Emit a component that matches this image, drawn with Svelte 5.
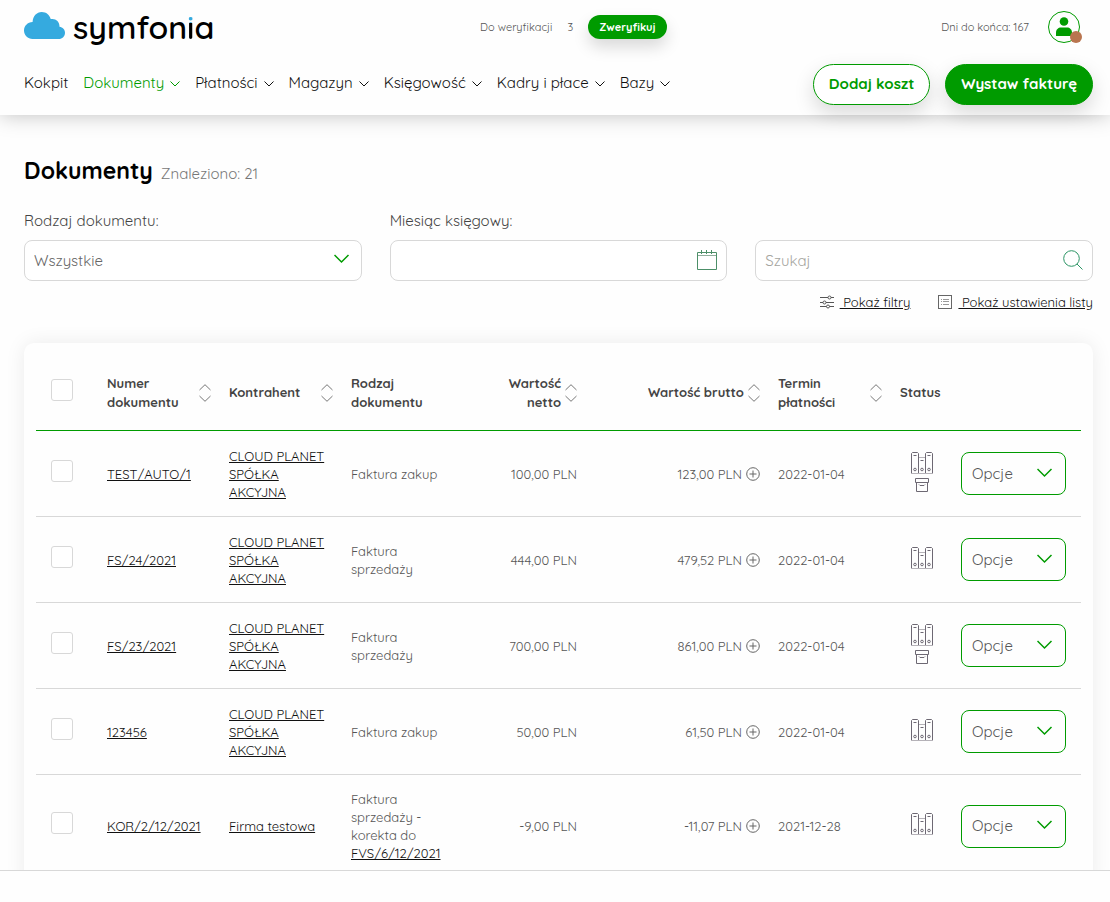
<script lang="ts">
	const nav = [
		{ label: 'Kokpit', menu: false, active: false },
		{ label: 'Dokumenty', menu: true, active: true },
		{ label: 'Płatności', menu: true, active: false },
		{ label: 'Magazyn', menu: true, active: false },
		{ label: 'Księgowość', menu: true, active: false },
		{ label: 'Kadry i płace', menu: true, active: false },
		{ label: 'Bazy', menu: true, active: false },
	];

	const documents = [
		{ number: 'TEST/AUTO/1', client: 'CLOUD PLANET SPÓŁKA AKCYJNA', type: 'Faktura zakup', ref: '', net: '100,00 PLN', gross: '123,00 PLN', due: '2022-01-04', archived: true },
		{ number: 'FS/24/2021', client: 'CLOUD PLANET SPÓŁKA AKCYJNA', type: 'Faktura sprzedaży', ref: '', net: '444,00 PLN', gross: '479,52 PLN', due: '2022-01-04', archived: false },
		{ number: 'FS/23/2021', client: 'CLOUD PLANET SPÓŁKA AKCYJNA', type: 'Faktura sprzedaży', ref: '', net: '700,00 PLN', gross: '861,00 PLN', due: '2022-01-04', archived: true },
		{ number: '123456', client: 'CLOUD PLANET SPÓŁKA AKCYJNA', type: 'Faktura zakup', ref: '', net: '50,00 PLN', gross: '61,50 PLN', due: '2022-01-04', archived: false },
		{ number: 'KOR/2/12/2021', client: 'Firma testowa', type: 'Faktura sprzedaży - korekta do', ref: 'FVS/6/12/2021', net: '-9,00 PLN', gross: '-11,07 PLN', due: '2021-12-28', archived: false },
	];

	let kind = $state('all');
	let month = $state('');
	let query = $state('');
	let selected = $state(documents.map(() => false));

	let allSelected = $derived(selected.every(Boolean));

	function toggleAll() {
		const next = !allSelected;
		selected = documents.map(() => next);
	}
</script>

{#snippet chevron()}
	<svg class="chevron" width="16" height="10" viewBox="0 0 16 10" fill="none" stroke="currentColor" stroke-width="1.5" aria-hidden="true">
		<path d="M.5 1l7 7 7-7" />
	</svg>
{/snippet}

{#snippet sort(label: string)}
	<button class="sort" aria-label="Sortuj: {label}">
		<svg width="12" height="18" viewBox="0 0 12 18" fill="none" stroke="currentColor">
			<path d="M.5 6L6 .7 11.500 6M.5 12L6 17.300l5.500-5.300" />
		</svg>
	</button>
{/snippet}

<div class="app">
	<header>
		<div class="topbar">
			<a class="logo" href="#start" aria-label="symfonia">
				<svg width="41" height="27" viewBox="0 0 41 27" aria-hidden="true">
					<path fill="#35aadf" d="M8.500 27C3.800 27 0 23.200 0 18.500 0 14.100 3.500 10.300 8.600 10.100 8.800 4.300 12.700 0 17.700 0 22.300 0 25.600 2.800 26.700 7.100 31.300 6.100 35.700 9.300 35.500 14.700 38.700 15.200 41 17.600 41 20.700 41 24.300 38.300 27 34.700 27Z" />
				</svg>
				<span class="wordmark">symfon<span class="dot-i">i</span>a</span>
			</a>
			<div class="account">
				<div class="verify">
					<span>Do weryfikacji</span>
					<span>3</span>
					<button class="verify-btn">Zweryfikuj</button>
				</div>
				<div class="user">
					<span>Dni do końca: 167</span>
					<button class="avatar" aria-label="Konto">
						<svg width="16" height="20" viewBox="0 0 16 20" fill="currentColor" aria-hidden="true">
							<circle cx="8" cy="4.500" r="4.300" />
							<path d="M0 19v-3.500C0 12.500 2.300 10.500 5 10.500h6c2.700 0 5 2 5 5V19z" />
						</svg>
						<span class="presence"></span>
					</button>
				</div>
			</div>
		</div>
		<div class="menubar">
			<nav>
				{#each nav as item}
					<a href="#menu" class:active={item.active}>
						{item.label}
						{#if item.menu}
							<svg width="10" height="6" viewBox="0 0 10 6" fill="none" stroke="currentColor" aria-hidden="true">
								<path d="M.5 .5L5 5 9.500 .5" />
							</svg>
						{/if}
					</a>
				{/each}
			</nav>
			<div class="actions">
				<button class="pill outline">Dodaj koszt</button>
				<button class="pill solid">Wystaw fakturę</button>
			</div>
		</div>
	</header>

	<main>
		<div class="heading">
			<h1>Dokumenty</h1>
			<span>Znaleziono: 21</span>
		</div>

		<div class="filters">
			<div class="field">
				<label for="kind">Rodzaj dokumentu:</label>
				<div class="control">
					<select id="kind" bind:value={kind}>
						<option value="all">Wszystkie</option>
						<option value="purchase">Faktura zakup</option>
						<option value="sale">Faktura sprzedaży</option>
					</select>
					<span class="adornment select-arrow">{@render chevron()}</span>
				</div>
			</div>
			<div class="field">
				<label for="month">Miesiąc księgowy:</label>
				<div class="control">
					<input id="month" type="text" bind:value={month} />
					<span class="adornment">
						<svg width="20" height="20" viewBox="0 0 20 20" fill="none" stroke="#4c8f68" aria-hidden="true">
							<path d="M.5 2.500h19v17H.5zM4.500 0v4M9.500 0v4M14.500 0v4" />
							<path stroke="#8fae9c" d="M1 5.500h18" />
						</svg>
					</span>
				</div>
			</div>
			<div class="field">
				<div class="control">
					<input type="search" placeholder="Szukaj" aria-label="Szukaj" bind:value={query} />
					<span class="adornment">
						<svg width="20" height="20" viewBox="0 0 20 20" fill="none" stroke="#2b9464" aria-hidden="true">
							<circle cx="8.500" cy="8.500" r="7.800" />
							<path d="M14 14l5.500 5.500" />
						</svg>
					</span>
				</div>
			</div>
		</div>

		<div class="list-links">
			<a href="#filters">
				<svg width="14" height="14" viewBox="0 0 14 14" fill="none" stroke="#555" aria-hidden="true">
					<path d="M0 2.500h8M11 2.500h3M0 7.500h3M6 7.500h8M0 11.500h6.500M9.500 11.500H14" />
					<circle cx="9.500" cy="2.500" r="1.500" />
					<circle cx="4.500" cy="7.500" r="1.500" />
					<circle cx="8" cy="11.500" r="1.500" />
				</svg>
				<span>&nbsp;Pokaż filtry</span>
			</a>
			<a href="#settings">
				<svg width="14" height="14" viewBox="0 0 14 14" fill="none" stroke="#666" aria-hidden="true">
					<rect x=".5" y=".5" width="13" height="13" />
					<path stroke="#999" d="M5 4.500h6M5 6.500h6M5 9.500h6M3 4.500h1M3 6.500h1M3 9.500h1" />
				</svg>
				<span>&nbsp;Pokaż ustawienia listy</span>
			</a>
		</div>

		<div class="card">
			<table>
				<colgroup>
					<col class="c-check" />
					<col class="c-std" />
					<col class="c-std" />
					<col class="c-std" />
					<col class="c-std" />
					<col class="c-gross" />
					<col class="c-std" />
					<col class="c-status" />
					<col class="c-options" />
				</colgroup>
				<thead>
					<tr>
						<th><input type="checkbox" aria-label="Zaznacz wszystkie" checked={allSelected} onchange={toggleAll} /></th>
						<th><div class="head">Numer dokumentu {@render sort('Numer dokumentu')}</div></th>
						<th><div class="head">Kontrahent {@render sort('Kontrahent')}</div></th>
						<th>Rodzaj dokumentu</th>
						<th class="num"><div class="head">Wartość netto {@render sort('Wartość netto')}</div></th>
						<th class="num"><div class="head">Wartość brutto {@render sort('Wartość brutto')}</div></th>
						<th><div class="head">Termin płatności {@render sort('Termin płatności')}</div></th>
						<th>Status</th>
						<th></th>
					</tr>
				</thead>
				<tbody>
					{#each documents as doc, i}
						<tr>
							<td><input type="checkbox" aria-label="Zaznacz {doc.number}" bind:checked={selected[i]} /></td>
							<td><a href="#document">{doc.number}</a></td>
							<td><a href="#client">{doc.client}</a></td>
							<td>{doc.type} {#if doc.ref}<a href="#document">{doc.ref}</a>{/if}</td>
							<td class="num">{doc.net}</td>
							<td class="num">
								<div class="gross">
									{doc.gross}
									<svg width="14" height="14" viewBox="0 0 14 14" fill="none" stroke="#666" aria-hidden="true">
										<circle cx="7" cy="7" r="6.300" />
										<path d="M7 3.500v7M3.500 7h7" />
									</svg>
								</div>
							</td>
							<td>{doc.due}</td>
							<td>
								<div class="status">
									<svg width="22" height="22" viewBox="0 0 22 22" fill="none" stroke="#6d6873" aria-hidden="true">
										<path stroke="#b5b2b8" d="M0 21.500h22M8 5.500h6" />
										<path d="M.5 21V1.500l1-1h5l1 1V21M14.500 21V1.500l1-1h5l1 1V21" />
										<path d="M2.500 3.500h3M9.500 8.500h3M16.500 3.500h3" />
										<circle cx="4" cy="17.500" r="1.300" />
										<circle cx="11" cy="17.500" r="1.300" />
										<circle cx="18" cy="17.500" r="1.300" />
									</svg>
									{#if doc.archived}
										<svg width="14" height="14" viewBox="0 0 14 14" fill="none" stroke="#6d6873" aria-hidden="true">
											<path d="M.5 .5h13v4H.5zM1.500 4.500v9h11v-9M4 6.500l1 1h4l1-1" />
										</svg>
									{/if}
								</div>
							</td>
							<td><button class="options">Opcje {@render chevron()}</button></td>
						</tr>
					{/each}
				</tbody>
			</table>
		</div>
	</main>

	<footer></footer>
</div>

<style>
	:global(body) {
		margin: 0;
	}

	.app {
		--green: #009b00;
		--text: #444;
		--line: #d8d8d8;
		display: flex;
		flex-direction: column;
		height: 100vh;
		background: #fefefe;
		color: var(--text);
		font-family: Quicksand, Lato, sans-serif;
		font-size: 13px;
		line-height: 18px;
	}

	.app * {
		box-sizing: border-box;
	}

	button,
	input,
	select {
		font: inherit;
		color: inherit;
	}

	button {
		padding: 0;
		border: 0;
		background: none;
		cursor: pointer;
	}

	svg {
		flex: none;
		display: block;
	}

	header {
		flex: none;
		position: relative;
		padding: 0 17px 0 24px;
		background: #fefefe;
		box-shadow: 0 0 20px rgba(0, 0, 0, 0.25);
	}

	.topbar {
		display: grid;
		grid-template-columns: 456fr 613fr;
		align-items: center;
		height: 54px;
	}

	.logo {
		display: flex;
		align-items: center;
		gap: 8px;
		color: #000;
		text-decoration: none;
	}

	.logo svg {
		margin-bottom: 4px;
	}

	.wordmark {
		font-size: 32px;
		font-weight: 600;
		line-height: 54px;
	}

	.dot-i {
		background: linear-gradient(#35aadf 40%, #000 40%);
		background-clip: text;
		color: transparent;
	}

	.account,
	.verify,
	.user {
		display: flex;
		align-items: center;
	}

	.account {
		justify-content: space-between;
		padding-right: 13px;
		font-size: 11px;
		color: #555;
	}

	.verify {
		gap: 15px;
	}

	.verify-btn {
		height: 24px;
		padding: 0 11px;
		border-radius: 12px;
		background: var(--green);
		box-shadow: 0 8px 16px rgba(0, 0, 0, 0.15);
		color: #fff;
		font-weight: 700;
	}

	.user {
		gap: 19px;
	}

	.avatar {
		position: relative;
		display: grid;
		place-items: center;
		width: 32px;
		height: 32px;
		border: 1px solid var(--green);
		border-radius: 50%;
		color: var(--green);
	}

	.presence {
		position: absolute;
		right: -3px;
		bottom: -1px;
		width: 12px;
		height: 12px;
		border-radius: 50%;
		background: #b9754f;
	}

	.menubar {
		display: flex;
		align-items: center;
		justify-content: space-between;
		height: 61px;
	}

	nav {
		display: flex;
		gap: 15px;
		padding-bottom: 4px;
		font-size: 15px;
	}

	nav a {
		display: flex;
		align-items: center;
		gap: 6px;
		color: #111;
		text-decoration: none;
		white-space: nowrap;
	}

	nav svg {
		margin-top: 2px;
	}

	nav a.active {
		color: var(--green);
	}

	.actions {
		display: flex;
		gap: 15px;
	}

	.pill {
		height: 41px;
		padding: 0 15px 2px;
		border: 1px solid var(--green);
		border-radius: 21px;
		box-shadow: 0 8px 20px rgba(0, 0, 0, 0.15);
		font-size: 15px;
		font-weight: 700;
		white-space: nowrap;
	}

	.outline {
		background: #fff;
		color: var(--green);
	}

	.solid {
		background: var(--green);
		color: #fff;
	}

	main {
		flex: 1;
		min-height: 0;
		overflow: hidden;
		padding: 42px 17px 0 24px;
	}

	.heading {
		display: flex;
		align-items: baseline;
		gap: 8px;
		font-size: 15px;
		color: #777;
	}

	h1 {
		margin: 0;
		font-size: 23px;
		line-height: 28px;
		color: #000;
	}

	.filters {
		display: grid;
		grid-template-columns: repeat(3, 1fr);
		align-items: end;
		gap: 28px;
		margin-top: 26px;
		font-size: 15px;
	}

	.field label {
		display: block;
		margin-bottom: 9px;
		line-height: 20px;
	}

	.control {
		position: relative;
	}

	.control input,
	.control select {
		display: block;
		width: 100%;
		height: 41px;
		padding: 0 40px 0 9px;
		border: 1px solid var(--line);
		border-radius: 8px;
		background: #fff;
		color: #666;
		appearance: none;
		outline: none;
	}

	.control input::placeholder {
		color: #a5a5a0;
	}

	.adornment {
		position: absolute;
		top: 10px;
		right: 10px;
		pointer-events: none;
	}

	.select-arrow {
		top: 14px;
		right: 12px;
		color: var(--green);
	}

	.list-links {
		display: flex;
		justify-content: flex-end;
		gap: 28px;
		margin-top: 12px;
	}

	.list-links a {
		display: flex;
		align-items: center;
		gap: 6px;
		color: #111;
		text-decoration: none;
	}

	.list-links span {
		text-decoration: underline;
	}

	.card {
		margin-top: 32px;
		padding: 12px;
		border-radius: 10px;
		background: #fefefe;
		box-shadow: 0 0 20px rgba(0, 0, 0, 0.08);
	}

	table {
		width: 100%;
		table-layout: fixed;
		border-collapse: separate;
		border-spacing: 0;
	}

	.c-check {
		width: 56px;
	}

	.c-std {
		width: 122px;
	}

	.c-gross {
		width: 183px;
	}

	.c-status {
		width: 61px;
	}

	.c-options {
		width: 135px;
	}

	th {
		height: 76px;
		padding: 0 3px 0 15px;
		border-bottom: 1px solid var(--green);
		font-weight: 700;
		line-height: 19px;
		text-align: left;
	}

	td {
		height: 86px;
		padding: 15px 3px 15px 15px;
		border-bottom: 1px solid var(--line);
		color: #555;
	}

	td a {
		color: #111;
	}

	.num {
		text-align: right;
	}

	.head {
		display: flex;
		align-items: center;
		justify-content: space-between;
		gap: 4px;
	}

	.num .head {
		justify-content: flex-end;
	}

	.sort {
		flex: none;
		color: #777;
	}

	.gross {
		display: flex;
		align-items: center;
		justify-content: flex-end;
		gap: 4px;
	}

	table input {
		display: block;
		width: 22px;
		height: 22px;
		margin: 0 0 6px;
		border: 1px solid var(--line);
		border-radius: 3px;
		background: #fff;
		appearance: none;
	}

	table input:checked {
		background: var(--green);
	}

	.status {
		display: flex;
		flex-direction: column;
		align-items: center;
		gap: 4px;
		margin-bottom: 4px;
	}

	.options {
		display: flex;
		align-items: center;
		justify-content: space-between;
		width: 105px;
		height: 43px;
		padding: 0 12px 0 10px;
		border: 1px solid var(--green);
		border-radius: 8px;
		font-size: 15px;
	}

	.options .chevron {
		margin-bottom: 2px;
		color: var(--green);
	}

	footer {
		flex: none;
		height: 32px;
		border-top: 1px solid var(--line);
		background: #fefefe;
	}
</style>
